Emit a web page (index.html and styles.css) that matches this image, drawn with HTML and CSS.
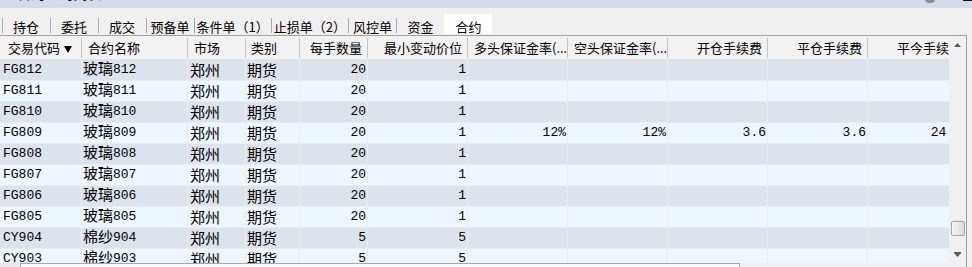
FILE: index.html
```html
<!DOCTYPE html>
<html lang="zh-CN">
<head>
<meta charset="utf-8">
<title>合约</title>
<link rel="stylesheet" href="styles.css">
</head>
<body>
<div class="titlebar">
  <span class="title">■ 合约查询列表</span>
  <span class="tb-icons"><i class="tb-dot"></i><i class="tb-bar"></i></span>
</div>
<div class="tabs">
  <div class="tab">持仓</div>
  <div class="tab">委托</div>
  <div class="tab">成交</div>
  <div class="tab">预备单</div>
  <div class="tab">条件单（1）</div>
  <div class="tab">止损单（2）</div>
  <div class="tab">风控单</div>
  <div class="tab">资金</div>
  <div class="tab active">合约</div>
</div>
<div class="frame">
  <div class="viewport">
    <div class="row head">
      <div class="h c1">交易代码 <svg class="sort" width="8" height="7" viewBox="0 0 8 7"><path d="M0 0H8L4 7Z" fill="#000"/></svg></div>
      <div class="h c2">合约名称</div>
      <div class="h c3">市场</div>
      <div class="h c4">类别</div>
      <div class="h r">每手数量</div>
      <div class="h r">最小变动价位</div>
      <div class="h r">多头保证金率(...</div>
      <div class="h r">空头保证金率(...</div>
      <div class="h r">开仓手续费</div>
      <div class="h r">平仓手续费</div>
      <div class="h r">平今手续费</div>
    </div>
    <div class="row odd">
      <div class="d code">FG812</div><div class="d name"><span class="cj">玻璃</span>812</div><div class="d cjc">郑州</div><div class="d cjc cat">期货</div>
      <div class="d r">20</div><div class="d r">1</div><div class="d r"></div><div class="d r"></div><div class="d r"></div><div class="d r"></div><div class="d r last"></div>
    </div>
    <div class="row even">
      <div class="d code">FG811</div><div class="d name"><span class="cj">玻璃</span>811</div><div class="d cjc">郑州</div><div class="d cjc cat">期货</div>
      <div class="d r">20</div><div class="d r">1</div><div class="d r"></div><div class="d r"></div><div class="d r"></div><div class="d r"></div><div class="d r last"></div>
    </div>
    <div class="row odd">
      <div class="d code">FG810</div><div class="d name"><span class="cj">玻璃</span>810</div><div class="d cjc">郑州</div><div class="d cjc cat">期货</div>
      <div class="d r">20</div><div class="d r">1</div><div class="d r"></div><div class="d r"></div><div class="d r"></div><div class="d r"></div><div class="d r last"></div>
    </div>
    <div class="row even">
      <div class="d code">FG809</div><div class="d name"><span class="cj">玻璃</span>809</div><div class="d cjc">郑州</div><div class="d cjc cat">期货</div>
      <div class="d r">20</div><div class="d r">1</div><div class="d r">12%</div><div class="d r">12%</div><div class="d r">3.6</div><div class="d r">3.6</div><div class="d r last">24.0</div>
    </div>
    <div class="row odd">
      <div class="d code">FG808</div><div class="d name"><span class="cj">玻璃</span>808</div><div class="d cjc">郑州</div><div class="d cjc cat">期货</div>
      <div class="d r">20</div><div class="d r">1</div><div class="d r"></div><div class="d r"></div><div class="d r"></div><div class="d r"></div><div class="d r last"></div>
    </div>
    <div class="row even">
      <div class="d code">FG807</div><div class="d name"><span class="cj">玻璃</span>807</div><div class="d cjc">郑州</div><div class="d cjc cat">期货</div>
      <div class="d r">20</div><div class="d r">1</div><div class="d r"></div><div class="d r"></div><div class="d r"></div><div class="d r"></div><div class="d r last"></div>
    </div>
    <div class="row odd">
      <div class="d code">FG806</div><div class="d name"><span class="cj">玻璃</span>806</div><div class="d cjc">郑州</div><div class="d cjc cat">期货</div>
      <div class="d r">20</div><div class="d r">1</div><div class="d r"></div><div class="d r"></div><div class="d r"></div><div class="d r"></div><div class="d r last"></div>
    </div>
    <div class="row even">
      <div class="d code">FG805</div><div class="d name"><span class="cj">玻璃</span>805</div><div class="d cjc">郑州</div><div class="d cjc cat">期货</div>
      <div class="d r">20</div><div class="d r">1</div><div class="d r"></div><div class="d r"></div><div class="d r"></div><div class="d r"></div><div class="d r last"></div>
    </div>
    <div class="row odd">
      <div class="d code">CY904</div><div class="d name"><span class="cj">棉纱</span>904</div><div class="d cjc">郑州</div><div class="d cjc cat">期货</div>
      <div class="d r">5</div><div class="d r">5</div><div class="d r"></div><div class="d r"></div><div class="d r"></div><div class="d r"></div><div class="d r last"></div>
    </div>
    <div class="row even">
      <div class="d code">CY903</div><div class="d name"><span class="cj">棉纱</span>903</div><div class="d cjc">郑州</div><div class="d cjc cat">期货</div>
      <div class="d r">5</div><div class="d r">5</div><div class="d r"></div><div class="d r"></div><div class="d r"></div><div class="d r"></div><div class="d r last"></div>
    </div>
  </div>
  <div class="vscroll">
    <div class="arrow"><svg width="7" height="4" viewBox="0 0 7 4"><path d="M0 4L3.5 0L7 4Z" fill="#5a5a5a"/></svg></div>
    <div class="track"><div class="thumb"></div></div>
    <div class="arrow"><svg width="7" height="5" viewBox="0 0 7 5"><path d="M0 0H7V1H0Z M0 1L3.5 5L7 1Z" fill="#5a5a5a"/></svg></div>
  </div>
  <div class="hscroll">
    <div class="hbtn"></div>
    <div class="hthumb"></div>
  </div>
  <div class="corner"></div>
</div>
</body>
</html>
```
FILE: styles.css
```css
* { box-sizing: border-box; margin: 0; padding: 0; }
html, body { width: 972px; height: 267px; overflow: hidden; }
body {
  background: #f0f0f0;
  font-family: "Noto Sans CJK SC", "Noto Sans", sans-serif;
  font-size: 13px;
  color: #000;
}

/* title bar (mostly cut off) */
.titlebar {
  height: 8px;
  background: #d6dbe9;
  display: flex;
  align-items: flex-start;
  justify-content: space-between;
  overflow: hidden;
}
.title {
  font-size: 14px;
  line-height: 14px;
  margin-top: -14px;
  color: #111;
  white-space: nowrap;
}
.tb-icons { display: flex; align-items: flex-start; gap: 28px; }
.tb-dot { display: block; width: 10px; height: 4px; margin-top: -1px; border-radius: 0 0 5px 5px; background: #8a8d96; }
.tb-bar { display: block; width: 9px; height: 1px; background: #111; }

/* tabs */
.tabs {
  display: flex;
  height: 20px;
  margin-top: 6px;
  padding-left: 2px;
}
.tab {
  min-width: 48px;
  padding: 5px 2.5px 0;
  line-height: 15px;
  text-align: center;
  white-space: nowrap;
  background: linear-gradient(#a9a9a9, #a9a9a9) left 4px / 1px 15px no-repeat;
}
.tab.active { background: #fff; }

/* grid frame */
.frame {
  margin-top: 1px;
  width: 967px;
  border-top: 1px solid #a0a0a0;
  border-right: 1px solid #a0a0a0;
  display: grid;
  grid-template-columns: 949px 17px;
  grid-template-rows: 227px 17px;
}
.viewport { overflow: hidden; background: #f0f0f0; }

.row {
  display: grid;
  grid-template-columns: 82px 106px 58px 54px 68px 100px 100px 100px 100px 100px 100px;
  width: 968px;
  height: 21px;
}
.row.head {
  height: 24px;
  background: #f2f2f2;
  border-bottom: 1px solid #e4e4e4;
}
.h {
  line-height: 23px;
  white-space: nowrap;
  overflow: hidden;
  padding: 0 6px;
  background: linear-gradient(#c4c4c4, #c4c4c4) right 2px / 1px 20px no-repeat;
}
.h.c1 { padding-left: 8px; }
.h.c4 { padding-left: 5px; }
.h.r { text-align: right; padding-right: 6px; }
.sort { margin-left: 1px; vertical-align: 0; }

.odd { background: #dde3ea; }
.even { background: #eef6fe; }
.d {
  font-family: "Liberation Mono", "Noto Sans CJK SC", monospace;
  font-size: 13px;
  line-height: 20px;
  white-space: nowrap;
  overflow: hidden;
  border-right: 1px solid #e9ecf0;
  border-bottom: 1px solid #e9ecf0;
  padding: 0 1px 0 2px;
}
.d.code { padding-left: 3px; }
.d.name { padding-left: 1px; }
.d.cjc {
  font-family: "Noto Sans CJK SC", sans-serif;
  font-size: 15px;
  line-height: 20px;
  padding-left: 2px;
}
.d.cat { padding-left: 1px; }
.cj {
  font-family: "Noto Sans CJK SC", sans-serif;
  font-size: 15px;
  line-height: 1;
  vertical-align: -1px;
}
.d.r { text-align: right; }
.d.last { padding-right: 5px; }

/* vertical scrollbar */
.vscroll {
  display: flex;
  flex-direction: column;
  background: #f0f0f0;
}
.arrow {
  height: 17px;
  display: flex;
  align-items: center;
  justify-content: center;
}
.track { flex: 1; }
.thumb {
  margin: 168px 0 0 2px;
  width: 14px;
  height: 15px;
  border: 1px solid #a3a3a3;
  border-radius: 2px;
  background: linear-gradient(to right, #f7f7f7, #dadada);
}

/* horizontal scrollbar */
.hscroll {
  display: flex;
  background: #f0f0f0;
}
.hbtn { width: 20px; background: #ebebeb; }
.hthumb {
  width: 720px;
  border: 1px solid #a8a8a8;
  background: #f9f9f9;
}
.corner { background: #f0f0f0; }
```
